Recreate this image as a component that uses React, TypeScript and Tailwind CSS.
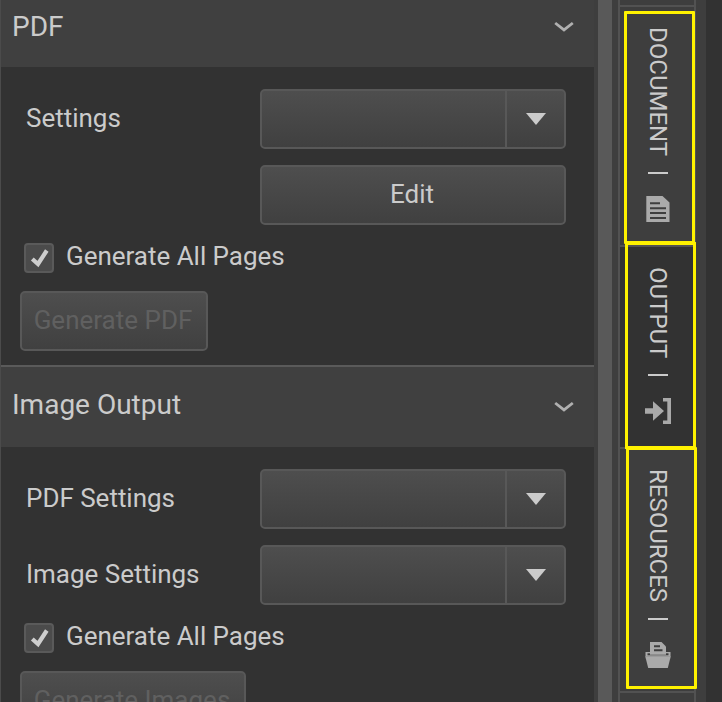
import type { ReactNode } from "react";

function Chevron() {
  return (
    <svg width="20" height="12" viewBox="0 0 20 12" fill="none" className="shrink-0">
      <path d="M1.2 2 10 8.9 18.8 2" stroke="#b0b0b0" strokeWidth="2.8" />
    </svg>
  );
}

function Header({ title, className }: { title: string; className: string }) {
  return (
    <div className={`flex justify-between bg-[#404040] pl-[11px] pr-5 ${className}`}>
      <h2 className="text-[28px] leading-8">{title}</h2>
      <Chevron />
    </div>
  );
}

function Row({ label, children }: { label: string; children: ReactNode }) {
  return (
    <div className="flex h-[60px] pl-[25px]">
      <span className="w-[234px] shrink-0 pt-[13px] leading-8 tracking-[-0.02px]">{label}</span>
      {children}
    </div>
  );
}

function Dropdown() {
  return (
    <div className="flex h-[60px] w-[306px] rounded-[5px] border-2 border-[#585858] bg-linear-to-b from-[#4e4e4e] to-[#404040]">
      <div className="flex-1" />
      <div className="flex w-[59px] items-center justify-center border-l-2 border-[#585858] pl-px">
        <svg width="20" height="12" viewBox="0 0 20 12">
          <path d="M0 0H20L10 12Z" fill="#cbcbcb" />
        </svg>
      </div>
    </div>
  );
}

function Check() {
  return (
    <label className="flex h-[30px] pl-[23px]">
      <span className="flex h-[30px] w-[30px] items-center justify-center rounded-[4px] border-2 border-[#5a5a5a] bg-[#4b4b4b]">
        <svg width="20" height="20" viewBox="0 0 20 20" fill="none">
          <path d="M3.3 11 9 16 17.8 2.5" stroke="#cecece" strokeWidth="4.2" />
        </svg>
      </span>
      <span className="-mt-[3px] pl-3 leading-8 tracking-[-0.02px]">Generate All Pages</span>
    </label>
  );
}

function DisabledButton({ label, width }: { label: string; width: string }) {
  return (
    <button
      disabled
      className={`ml-[19px] h-[60px] shrink-0 rounded-[5px] border-2 border-[#585858] bg-linear-to-b from-[#4e4e4e] to-[#404040] pr-[2px] pb-[2px] whitespace-nowrap text-[#606060] ${width}`}
    >
      {label}
    </button>
  );
}

function Tab({ label, className, icon }: { label: string; className: string; icon: ReactNode }) {
  return (
    <div className={`flex shrink-0 flex-col items-center justify-end border-b-2 border-[#525252] pl-[2px] ${className}`}>
      <span className="text-[24px] leading-7 whitespace-nowrap [writing-mode:vertical-rl]">{label}</span>
      <span className="mt-4 h-[2px] w-5 bg-[#cbcbcb]" />
      <span className="mt-[21px] flex h-7 w-7 items-center justify-center">{icon}</span>
    </div>
  );
}

const documentIcon = (
  <svg width="28" height="28" viewBox="0 0 28 28">
    <path d="M2.3 1H18.5L25.5 7.5V27H2.3Z" fill="#aaa" />
    <path d="M6 8.2H16M6 13.2H22M6 18H22M6 23H22" stroke="#3e3e3e" strokeWidth="1.9" />
  </svg>
);

const outputIcon = (
  <svg width="28" height="28" viewBox="0 0 28 28" fill="#a9a9a9">
    <path d="M1 11.2H9V4.3L20 14 9 23.7V16.8H1Z" />
    <path d="M19 1H27V27H19V23.4H23.3V4.6H19Z" />
  </svg>
);

const resourcesIcon = (
  <svg width="28" height="28" viewBox="0 0 28 28">
    <path d="M1.5 11H26.5V15.5H1.5Z" fill="#aaa" />
    <path d="M3.5 12.3H24.5V14.3H3.5Z" fill="#3e3e3e" />
    <path d="M6 1H17.5L22 5.5V13.8H6Z" fill="#aaa" />
    <path d="M10 5.2H16M10 9.2H18.5" stroke="#3e3e3e" strokeWidth="1.9" />
    <path d="M1.2 15.3H26.8L23.8 27H4.2Z" fill="#aaa" />
  </svg>
);

export default function App() {
  return (
    <div className="relative flex h-[702px] w-[722px] overflow-hidden bg-[#323232] font-[Roboto,sans-serif] text-[26px] text-[#cbcbcb]">
      <main className="flex w-[594px] shrink-0 flex-col border-l border-[#4b4b4b]">
        <Header title="PDF" className="h-[67px] shrink-0 pt-[11px] [&>svg]:mt-[10px]" />
        <section className="flex h-[298px] shrink-0 flex-col pt-[22px]">
          <Row label="Settings">
            <Dropdown />
          </Row>
          <button className="mt-4 ml-[259px] h-[60px] w-[306px] rounded-[5px] border-2 border-[#585858] bg-linear-to-b from-[#4e4e4e] to-[#404040] pr-[2px] pb-[2px]">
            Edit
          </button>
          <div className="mt-[18px] mb-[18px]">
            <Check />
          </div>
          <DisabledButton label="Generate PDF" width="w-[188px]" />
        </section>
        <Header title="Image Output" className="h-[82px] shrink-0 border-t-2 border-[#5a5a5a] pt-[22px] [&>svg]:mt-[12px]" />
        <section className="flex flex-col pt-[22px]">
          <Row label="PDF Settings">
            <Dropdown />
          </Row>
          <div className="mt-4">
            <Row label="Image Settings">
              <Dropdown />
            </Row>
          </div>
          <div className="mt-[18px] mb-[18px]">
            <Check />
          </div>
          <DisabledButton label="Generate Images" width="w-[226px]" />
        </section>
      </main>
      <div className="w-1 shrink-0 bg-[#3e3e3e]" />
      <div className="w-[14px] shrink-0 bg-[#595959]" />
      <div className="w-[6px] shrink-0 bg-[#3e3e3e]" />
      <nav className="flex w-[78px] shrink-0 flex-col border-x-2 border-[#525252] bg-[#3e3e3e]">
        <div className="h-[7px] shrink-0 border-b-2 border-[#525252]" />
        <Tab label="DOCUMENT" className="h-[240px] pb-[22px]" icon={documentIcon} />
        <Tab label="OUTPUT" className="h-[202px] bg-[#323232] pb-[22px]" icon={outputIcon} />
        <Tab label="RESOURCES" className="h-[244px] pb-[22px]" icon={resourcesIcon} />
      </nav>
      <div className="w-[10px] shrink-0 bg-[#3e3e3e]" />
      <div className="absolute top-[242px] left-[625px] h-[207px] w-[71px] border-[3px] border-[#fff200]" />
      <div className="absolute top-[11px] left-[624px] h-[233px] w-[71px] rounded-[1px] border-[3px] border-[#fff200]" />
      <div className="absolute top-[447px] left-[626px] h-[242px] w-[71px] rounded-[1px] border-[3px] border-[#fff200]" />
    </div>
  );
}
